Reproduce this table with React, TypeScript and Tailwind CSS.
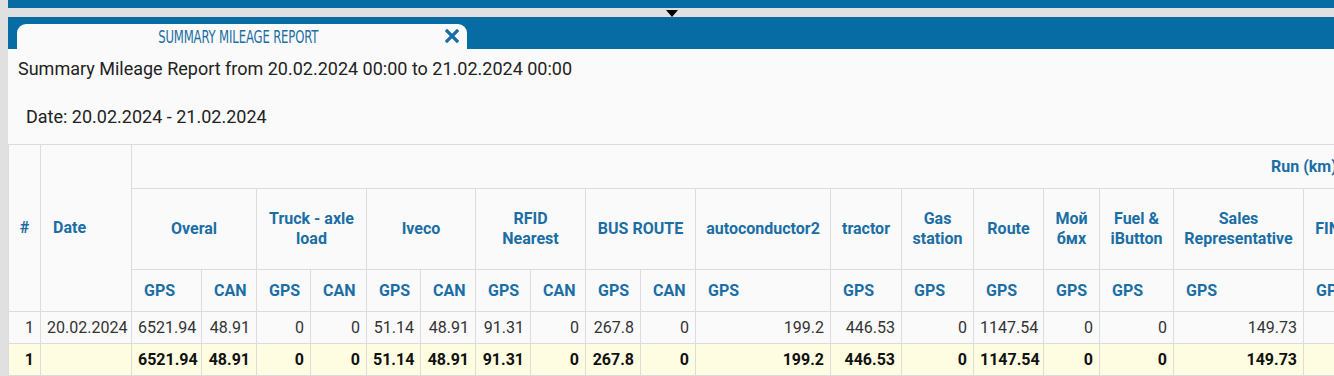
import React from 'react';

type Group = { name: string[]; subs: string[]; widths: number[] };

const groups: Group[] = [
  { name: ['Overal'], subs: ['GPS', 'CAN'], widths: [70, 55] },
  { name: ['Truck - axle', 'load'], subs: ['GPS', 'CAN'], widths: [54, 56] },
  { name: ['Iveco'], subs: ['GPS', 'CAN'], widths: [54, 55] },
  { name: ['RFID', 'Nearest'], subs: ['GPS', 'CAN'], widths: [55, 55] },
  { name: ['BUS ROUTE'], subs: ['GPS', 'CAN'], widths: [55, 55] },
  { name: ['autoconductor2'], subs: ['GPS'], widths: [135] },
  { name: ['tractor'], subs: ['GPS'], widths: [71] },
  { name: ['Gas', 'station'], subs: ['GPS'], widths: [72] },
  { name: ['Route'], subs: ['GPS'], widths: [70] },
  { name: ['Мой', 'бмх'], subs: ['GPS'], widths: [56] },
  { name: ['Fuel &', 'iButton'], subs: ['GPS'], widths: [74] },
  { name: ['Sales', 'Representative'], subs: ['GPS'], widths: [130] },
  { name: ['FINANCE'], subs: ['GPS'], widths: [90] },
  { name: ['Trailer'], subs: ['GPS'], widths: [80] },
  { name: ['Cargo van'], subs: ['GPS'], widths: [80] },
  { name: ['Taxi'], subs: ['GPS'], widths: [80] },
  { name: ['Mini bus'], subs: ['GPS'], widths: [80] },
  { name: ['Tanker'], subs: ['GPS'], widths: [80] },
  { name: ['Delivery'], subs: ['GPS'], widths: [80] },
  { name: ['Loader'], subs: ['GPS'], widths: [80] },
  { name: ['Crane'], subs: ['GPS'], widths: [80] },
  { name: ['Pickup'], subs: ['GPS'], widths: [80] },
  { name: ['Ambulance'], subs: ['GPS'], widths: [80] },
  { name: ['Scooter'], subs: ['GPS'], widths: [80] },
  { name: ['Tow truck'], subs: ['GPS'], widths: [80] },
];

const values = [
  '6521.94', '48.91', '0', '0', '51.14', '48.91', '91.31', '0', '267.8', '0',
  '199.2', '446.53', '0', '1147.54', '0', '0', '149.73', '598.12',
  '0', '0', '0', '0', '0', '0', '0', '0', '0', '0', '0', '0',
];

const widths = [32, 91, ...groups.flatMap((g) => g.widths)];
const total = widths.reduce((a, b) => a + b, 0);

const th = 'border border-[#dcdcdc] font-bold text-[#1b6ea5]';
const td = 'border border-[#dcdcdc] px-1.5 text-right';

export default function App() {
  return (
    <div className="flex h-[376px] w-[1334px] overflow-hidden bg-[#e0e0e0] font-['Roboto',sans-serif]">
      <div className="ml-2 flex min-w-0 flex-1 flex-col">
        <div className="h-[9px] bg-[#076ca3]" />
        <div className="relative h-[9px]">
          <span className="absolute left-[658px] top-[2px] h-0 w-0 border-x-[6px] border-t-[7px] border-x-transparent border-t-black" />
        </div>
        <div className="flex h-[34px] items-end bg-[#076ca3] pl-[9px]">
          <div className="relative flex h-[25px] w-[450px] items-center justify-center rounded-t-[9px] bg-[#fafafa] pr-[8px]">
            <span className="inline-block origin-center scale-x-[0.72] font-['DejaVu_Sans_Condensed','DejaVu_Sans',sans-serif] text-[18px] tracking-[-0.2px] whitespace-nowrap text-[#1b6ea5]">
              SUMMARY MILEAGE REPORT
            </span>
            <svg className="absolute right-[8px] top-[5px]" width="14" height="14" viewBox="0 0 14 14">
              <path d="M2 2 L12 12 M12 2 L2 12" stroke="#1b6ea5" strokeWidth="3.2" strokeLinecap="square" />
            </svg>
          </div>
        </div>
        <div className="flex-1 bg-[#fafafa]">
          <div className="pl-[10px] pt-[9px] text-[18px] leading-[22px] text-[#222]">
            Summary Mileage Report from 20.02.2024 00:00 to 21.02.2024 00:00
          </div>
          <div className="pl-[18px] pt-[26px] text-[18px] leading-[22px] text-[#222]">
            Date: 20.02.2024 - 21.02.2024
          </div>
          <div className="mt-[16px] overflow-hidden">
            <table
              className="table-fixed border-collapse text-[16px]"
              style={{ width: total }}
            >
              <colgroup>
                {widths.map((w, i) => (
                  <col key={i} style={{ width: w }} />
                ))}
              </colgroup>
              <thead className="bg-[#fafafa]">
                <tr className="h-[44px]">
                  <th rowSpan={3} className={`${th} text-center`}>#</th>
                  <th rowSpan={3} className={`${th} pl-3 text-left`}>Date</th>
                  <th colSpan={widths.length - 2} className={`${th} pl-[1139px] text-left`}>
                    Run (km)
                  </th>
                </tr>
                <tr className="h-[81px]">
                  {groups.map((g) => (
                    <th
                      key={g.name.join(' ')}
                      colSpan={g.subs.length}
                      className={`${th} px-1 text-center leading-[20px] whitespace-nowrap`}
                    >
                      {g.name.map((line, i) => (
                        <div key={i}>{line}</div>
                      ))}
                    </th>
                  ))}
                </tr>
                <tr className="h-[42px]">
                  {groups.flatMap((g) =>
                    g.subs.map((s, i) => (
                      <th key={g.name.join(' ') + s + i} className={`${th} pl-3 text-left`}>
                        {s}
                      </th>
                    ))
                  )}
                </tr>
              </thead>
              <tbody className="text-[#333]">
                <tr className="h-[32px] bg-[#fafafa]">
                  <td className={td}>1</td>
                  <td className={td}>20.02.2024</td>
                  {values.map((v, i) => (
                    <td key={i} className={td}>{v}</td>
                  ))}
                </tr>
                <tr className="h-[32px] bg-[#fffde1] font-bold text-[#111]">
                  <td className={td}>1</td>
                  <td className={td}></td>
                  {values.map((v, i) => (
                    <td key={i} className={td}>{v}</td>
                  ))}
                </tr>
              </tbody>
            </table>
          </div>
        </div>
      </div>
    </div>
  );
}
